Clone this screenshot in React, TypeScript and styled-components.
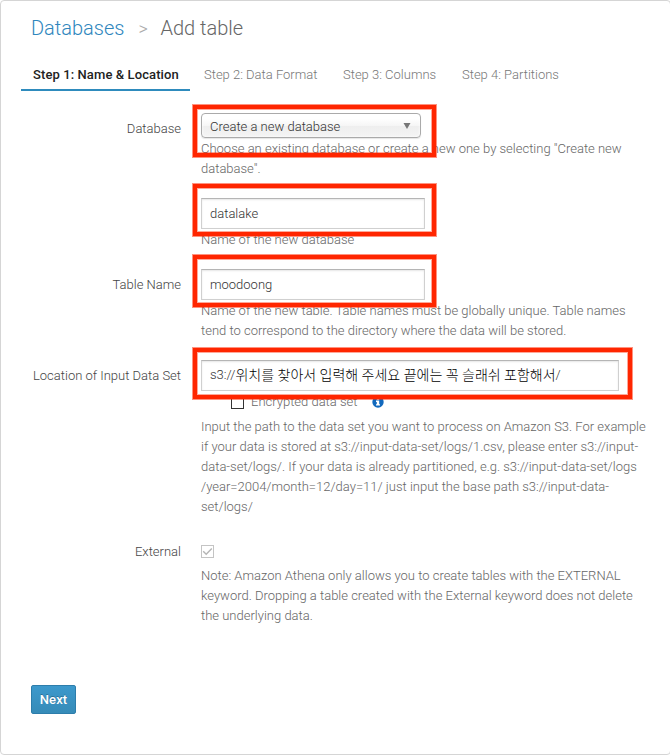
import React from 'react';
import styled, { createGlobalStyle } from 'styled-components';

const GlobalStyle = createGlobalStyle`
  *, *::after { box-sizing: border-box; }
  body {
    margin: 0;
    background: #fff;
    font: 300 13px/20px Roboto, "Noto Sans CJK KR", sans-serif;
    color: #666;
  }
  input, button { font: inherit; }
`;

const Card = styled.main`
  width: 671px;
  height: 755px;
  padding: 0 20px;
  border: 1px solid #d5d5d5;
  border-radius: 4px;
  overflow: hidden;
`;

const Breadcrumb = styled.h1`
  display: flex;
  align-items: center;
  height: 30px;
  margin: 12px 0 0 10px;
  font-size: 20px;
  font-weight: 300;
  color: #666;
`;

const Crumb = styled.a`
  color: #2e86bd;
`;

const Separator = styled.span`
  width: 36px;
  padding: 1px 0 0 14px;
  font-size: 18px;
  color: #aaa;
`;

const Tabs = styled.nav`
  display: flex;
  margin-top: 17px;
`;

const Tab = styled.a<{ $width: number; $active?: boolean }>`
  width: ${(p) => p.$width}px;
  height: 31px;
  margin-right: ${(p) => (p.$active ? 2 : 0)}px;
  padding: 5px 0 0 12px;
  white-space: nowrap;
  color: ${(p) => (p.$active ? '#222' : '#777')};
  font-weight: ${(p) => (p.$active ? 500 : 300)};
  letter-spacing: ${(p) => (p.$active ? '0.1px' : 'normal')};
  border-bottom: 2px solid ${(p) => (p.$active ? '#2e8bbd' : 'transparent')};
`;

const Row = styled.div<{ $gap: number }>`
  display: grid;
  grid-template-columns: 160px 460px;
  column-gap: 20px;
  margin-top: ${(p) => p.$gap}px;
`;

const Label = styled.label<{ $offset: number }>`
  padding-top: ${(p) => p.$offset}px;
  text-align: right;
  white-space: nowrap;
  color: #444;
`;

const Highlighted = styled.div<{ $width: number; $top: number; $height: number }>`
  position: relative;

  &::after {
    content: '';
    position: absolute;
    left: -8px;
    top: ${(p) => p.$top}px;
    width: ${(p) => p.$width}px;
    height: ${(p) => p.$height}px;
    border: 4px solid #ff2600;
    outline: 1px solid rgba(255, 38, 0, 0.5);
    box-shadow: inset 0 0 0 1px rgba(255, 38, 0, 0.4);
    z-index: 1;
    pointer-events: none;
  }
`;

const Select = styled.div`
  display: flex;
  align-items: center;
  justify-content: space-between;
  width: 220px;
  height: 25px;
  padding: 2px 9px 0 8px;
  border: 1px solid #aaa;
  border-radius: 4px;
  background: linear-gradient(#fff 20%, #f6f6f6 50%, #eee 52%, #f4f4f4 100%);
  box-shadow: 0 0 3px #fff inset, 0 1px 1px rgba(0, 0, 0, 0.1);
  color: #333;
`;

const TextInput = styled.input`
  display: block;
  width: 224px;
  height: 31px;
  padding: 0 8px 1px;
  border: 1px solid #d0d0d0;
  border-top-color: #b5b5b5;
  border-radius: 0;
  outline: none;
  box-shadow: inset 0 1px 2px rgba(0, 0, 0, 0.1);
  color: #333;
`;

const LocationInput = styled(TextInput).attrs({ as: 'div' })`
  display: flex;
  align-items: center;
  width: 418px;
  white-space: pre;
`;

const Korean = styled.span`
  font-size: 14px;
  font-weight: 300;
  color: #000;
`;

const Help = styled.p<{ $gap?: number }>`
  margin: ${(p) => p.$gap ?? 0}px 0 0;
  color: #666;
  white-space: pre;
`;

const CheckLine = styled.div`
  display: flex;
  align-items: center;
  height: 20px;
  margin-top: 1px;
  padding-left: 30px;
  color: #666;
`;

const CheckHolder = styled.div`
  height: 20px;
  padding-top: 3px;
`;

const Box = styled.span<{ $muted?: boolean }>`
  display: flex;
  width: 13px;
  height: 13px;
  border: 1px solid ${(p) => (p.$muted ? '#c4c4c4' : '#333')};
`;

const CheckText = styled.span`
  width: 106px;
  margin: 0 15px 0 7px;
  white-space: nowrap;
`;

const NextButton = styled.button`
  display: block;
  width: 45px;
  height: 29px;
  margin: 59px 0 0 10px;
  padding: 0;
  border: 1px solid #2d7dab;
  border-radius: 2px;
  background: linear-gradient(#3c99cc, #368bb8);
  color: #fff;
  font-weight: 500;
  letter-spacing: 0.15px;
  text-shadow: 0 -1px 0 rgba(0, 0, 0, 0.25);
`;

const Arrow = () => (
  <svg width="8" height="7" viewBox="0 0 8 7">
    <path d="M0.5 0h7L4 6z" fill="#777" />
  </svg>
);

const InfoIcon = () => (
  <svg width="12" height="12" viewBox="0 0 12 12">
    <circle cx="6" cy="6" r="5.7" fill="#1269bd" />
    <path d="M4.8 1.7h2.4v2H4.8zM4 4.6h3.2v3.6H8v1.4H4V8.2h.8V6H4z" fill="#fff" />
  </svg>
);

const Check = () => (
  <svg width="11" height="11" viewBox="0 0 11 11">
    <path d="M1.2 5.3l3 3L9.8 2.4" fill="none" stroke="#b5b5b5" strokeWidth="1.4" />
  </svg>
);

export default function App() {
  return (
    <>
      <GlobalStyle />
      <Card>
        <Breadcrumb>
          <Crumb>Databases</Crumb>
          <Separator>&gt;</Separator>
          <span>Add table</span>
        </Breadcrumb>
        <Tabs>
          <Tab $width={169} $active>Step 1: Name &amp; Location</Tab>
          <Tab $width={139}>Step 2: Data Format</Tab>
          <Tab $width={119}>Step 3: Columns</Tab>
          <Tab $width={125}>Step 4: Partitions</Tab>
        </Tabs>

        <Row $gap={22}>
          <Label $offset={6}>Database</Label>
          <div>
            <Highlighted $width={243} $top={-8} $height={52}>
              <Select>
                Create a new database
                <Arrow />
              </Select>
            </Highlighted>
            <Help $gap={1}>{'Choose an existing database or create a new one by selecting "Create new\ndatabase".'}</Help>
          </div>
        </Row>

        <Row $gap={19}>
          <span />
          <div>
            <Highlighted $width={243} $top={-14} $height={52}>
              <TextInput defaultValue="datalake" />
            </Highlighted>
            <Help $gap={1}>Name of the new database</Help>
          </div>
        </Row>

        <Row $gap={19}>
          <Label $offset={6}>Table Name</Label>
          <div>
            <Highlighted $width={243} $top={-14} $height={52}>
              <TextInput defaultValue="moodoong" />
            </Highlighted>
            <Help $gap={1}>{'Name of the new table. Table names must be globally unique. Table names\ntend to correspond to the directory where the data will be stored.'}</Help>
          </div>
        </Row>

        <Row $gap={19}>
          <Label $offset={6}>Location of Input Data Set</Label>
          <div>
            <Highlighted $width={439} $top={-12} $height={51}>
              <LocationInput>
                s3://<Korean>위치를 찾아서 입력해 주세요 끝에는 꼭 슬래쉬 포함해서</Korean>/
              </LocationInput>
            </Highlighted>
            <CheckLine>
              <Box />
              <CheckText>Encrypted data set</CheckText>
              <InfoIcon />
            </CheckLine>
            <Help $gap={5}>{'Input the path to the data set you want to process on Amazon S3. For example\nif your data is stored at s3://input-data-set/logs/1.csv, please enter s3://input-\ndata-set/logs/. If your data is already partitioned, e.g. s3://input-data-set/logs\n/year=2004/month=12/day=11/ just input the base path s3://input-data-\nset/logs/'}</Help>
          </div>
        </Row>

        <Row $gap={25}>
          <Label $offset={0}>External</Label>
          <div>
            <CheckHolder>
              <Box $muted>
                <Check />
              </Box>
            </CheckHolder>
            <Help $gap={4}>{'Note: Amazon Athena only allows you to create tables with the EXTERNAL\nkeyword. Dropping a table created with the External keyword does not delete\nthe underlying data.'}</Help>
          </div>
        </Row>

        <NextButton>Next</NextButton>
      </Card>
    </>
  );
}
